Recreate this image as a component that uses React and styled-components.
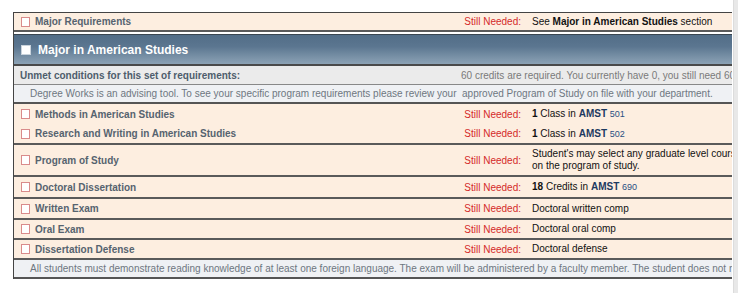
import React from 'react';
import styled, { createGlobalStyle } from 'styled-components';

const GlobalStyle = createGlobalStyle`
  html, body {
    margin: 0;
    padding: 0;
    background: #fff;
  }
  body {
    font-family: "Liberation Sans", Arial, sans-serif;
    font-size: 10px;
    color: #111;
  }
`;

const Page = styled.div`
  display: flex;
  height: 293px;
`;

const Viewport = styled.div`
  width: 719px;
  margin-left: 13px;
  padding-top: 12px;
  overflow: hidden;
`;

const ScrollTrack = styled.div`
  width: 4px;
  margin-left: auto;
  background: #e8e8e8;
  border-left: 1px solid #dcdcdc;
`;

const Sheet = styled.div`
  width: 880px;
  border-left: 1px solid #444;
`;

const Row = styled.div`
  display: grid;
  grid-template-columns: 448px 64px 1fr;
  align-items: center;
  height: ${p => p.h || 18}px;
  background: #fdeee0;
  border-bottom: ${p => (p.flat ? 'none' : '2px solid #5a5a5a')};
  border-top: ${p => (p.top ? '1px solid #444' : 'none')};
  margin-bottom: ${p => p.gap || 0}px;
`;

const Label = styled.div`
  display: flex;
  align-items: center;
  padding-left: 7px;
  font-weight: bold;
  color: #56636f;
`;

const Box = styled.span`
  display: inline-block;
  width: 7px;
  height: 8px;
  border: 1px solid #d98b8b;
  background: #fff;
  margin-right: 5px;
`;

const Needed = styled.div`
  text-align: right;
  padding-right: 5px;
  color: #d42a2a;
`;

const Value = styled.div`
  padding-left: 6px;
  color: #111;
  line-height: 12px;
`;

const Course = styled.b`
  color: #1d3a60;
`;

const Num = styled.span`
  color: #2a4f82;
  font-size: 9px;
`;

const Header = styled.div`
  display: flex;
  align-items: center;
  height: 29px;
  padding-left: 7px;
  border-top: 1px solid #3a4650;
  border-bottom: 2px solid #4a4a4a;
  background: linear-gradient(#526d87 0%, #5b7690 40%, #7c94a9 80%, #8ca2b5 100%);
  color: #fff;
  font-size: 12px;
  font-weight: bold;
`;

const HeaderBox = styled.span`
  display: inline-block;
  width: 8px;
  height: 8px;
  background: #fff;
  border: 1px solid #c9d3dc;
  margin-right: 7px;
`;

const Unmet = styled.div`
  display: grid;
  grid-template-columns: 447px 1fr;
  align-items: center;
  height: 18px;
  background: #ebebeb;
  border-bottom: 1px solid #888;
`;

const UnmetTitle = styled.div`
  padding-left: 6px;
  font-weight: bold;
  color: #4e5d6b;
`;

const UnmetText = styled.div`
  color: #7a7a7a;
  white-space: nowrap;
`;

const Note = styled.div`
  height: 17px;
  display: flex;
  align-items: center;
  padding-left: 16px;
  background: #eff1f4;
  color: #6e7781;
  white-space: pre;
  border-bottom: 2px solid #555;
`;

const reqs = [
  { label: 'Methods in American Studies', value: <><b>1</b> Class in <Course>AMST</Course> <Num>501</Num></>, flat: true, h: 20 },
  { label: 'Research and Writing in American Studies', value: <><b>1</b> Class in <Course>AMST</Course> <Num>502</Num></>, h: 19 },
  { label: 'Program of Study', value: <>Student's may select any graduate level course listed<br />on the program of study.</>, h: 30 },
  { label: 'Doctoral Dissertation', value: <><b>18</b> Credits in <Course>AMST</Course> <Num>690</Num></>, h: 20 },
  { label: 'Written Exam', value: 'Doctoral written comp', h: 19 },
  { label: 'Oral Exam', value: 'Doctoral oral comp', h: 18 },
  { label: 'Dissertation Defense', value: 'Doctoral defense', h: 18 },
];

export default function App() {
  return (
    <Page>
      <GlobalStyle />
      <Viewport>
        <Sheet>
          <Row top gap={2} h={17}>
            <Label><Box />Major Requirements</Label>
            <Needed>Still Needed:</Needed>
            <Value>See <b>Major in American Studies</b> section</Value>
          </Row>
          <Header><HeaderBox />Major in American Studies</Header>
          <Unmet>
            <UnmetTitle>Unmet conditions for this set of requirements:</UnmetTitle>
            <UnmetText>60 credits are required. You currently have 0,  you still need 60 credits.</UnmetText>
          </Unmet>
          <Note>Degree Works is an advising tool. To see your specific program requirements please review your  approved Program of Study on file with your department.</Note>
          {reqs.map(r => (
            <Row key={r.label} flat={r.flat} h={r.h}>
              <Label><Box />{r.label}</Label>
              <Needed>Still Needed:</Needed>
              <Value>{r.value}</Value>
            </Row>
          ))}
          <Note>All students must demonstrate reading knowledge of at least one foreign language. The exam will be administered by a faculty member. The student does not need to register.</Note>
        </Sheet>
      </Viewport>
      <ScrollTrack />
    </Page>
  );
}
